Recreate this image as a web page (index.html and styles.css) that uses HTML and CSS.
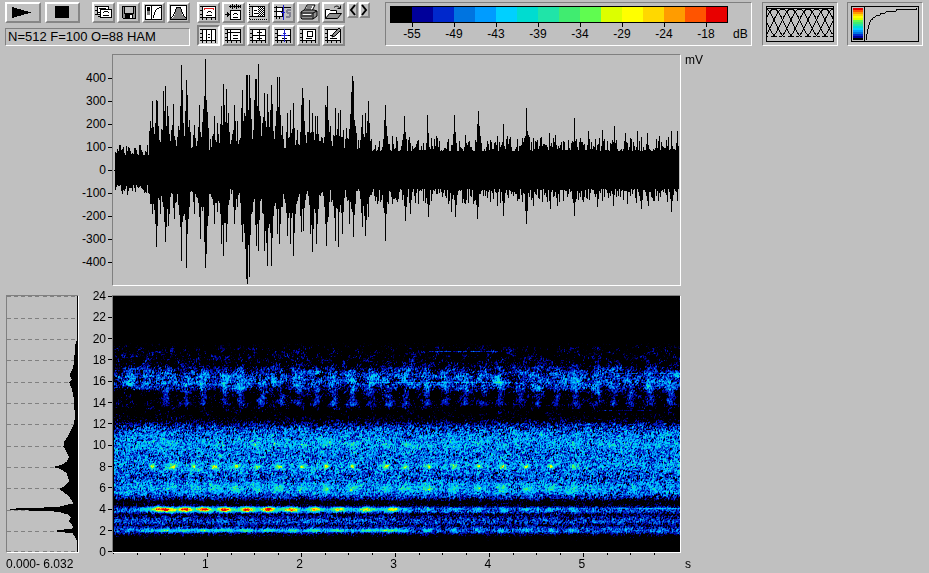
FILE: index.html
```
<!DOCTYPE html>
<html lang="en">

<head>
  <meta charset="utf-8">
  <title>Spectrogram</title>
  <link rel="stylesheet" href="styles.css">
</head>

<body>
  <!-- shapes shared by the toolbar icons -->
  <svg class="defs" width="0" height="0">
    <symbol id="sheet" viewBox="0 0 19 17">
      <path class="paper" d="M3.5 2.5h13v11h-13z" />
      <path class="ink" d="M1 2.5h2M1 6.5h2M1 10.5h2M1 13.5h2M3.5 14v2M7.5 14v2M12.5 14v2M16.5 14v2" />
    </symbol>
    <symbol id="chirp" viewBox="0 0 19 17">
      <path class="ink" d="M9 7.5h3M8 8.5h1M12 8.5h1M7 11.5h6" />
    </symbol>
  </svg>

  <header class="toolbar">
    <div class="transport">
      <div class="buttons">
        <button class="btn play" aria-label="Play"><svg viewBox="0 0 32 17"><path d="M5 3l19 5.5L5 14z" /></svg></button>
        <button class="btn stop" aria-label="Stop"><svg viewBox="0 0 31 17"><path d="M8 2h14v12H8z" /></svg></button>
        <button class="btn" aria-label="Copy">
          <svg viewBox="0 0 19 17">
            <path class="paper" d="M3.5 2.5h11v8h-11z" />
            <path class="ink" d="M1 2.5h2M1 6.5h2M1 10.5h2M5 4.5h7" />
            <path class="paper" d="M6.5 5.5h11v8h-11z" />
            <path class="ink" d="M4 8.5h2M4 12.5h2M10 7.5h4M9 8.5h1M14 8.5h1M9 11.5h6" />
          </svg>
        </button>
        <button class="btn" aria-label="Save">
          <svg viewBox="0 0 19 17">
            <path class="grey" d="M3.5 2.5h13v12h-12l-1-1z" />
            <path d="M6 3h8v6H6z" fill="#c0c0c0" />
            <path d="M6 10h8v4H6z" />
            <path d="M11 11h2v3h-2z" fill="#fff" />
            <path class="ink" d="M5.5 3v6h9V3" />
          </svg>
        </button>
        <button class="btn" aria-label="Colour curve">
          <svg viewBox="0 0 19 17">
            <path class="paper" d="M1.5 1.5h16v14h-16z" />
            <path d="M3 3h3v4H3z" />
            <path d="M3 7h3v4H3z" fill="#808080" />
            <path class="ink" d="M7.5 2v13M9.5 14v-3M10.5 11V8M11.5 8V6M12 5.5h1M13 4.5h2M15 3.5h2" />
          </svg>
        </button>
        <button class="btn" aria-label="Window function">
          <svg viewBox="0 0 19 17">
            <path class="paper" d="M1.5 1.5h16v14h-16z" />
            <path d="M2 14h1l2-2 3-8h3l3 8 2 2h1v1H2z" fill="#808080" />
            <path class="ink" d="M2 13.5h1M3.5 13v-1M4.5 12v-2M5.5 10V8M6.5 8V5M7.5 5V3M8 3.5h3M11.5 5V3M12.5 8V5M13.5 10V8M14.5 12v-2M15.5 13v-1M16 13.5h1" />
          </svg>
        </button>
      </div>
      <output class="status sunken">N=512 F=100 O=88 HAM</output>
    </div>

    <div class="tools">
      <button class="btn" aria-label="Spectrum peak"><svg viewBox="0 0 19 17"><use href="#sheet" /><use href="#chirp" /><path class="red" d="M5.5 6V4.5h9V6" /></svg></button>
      <button class="btn" aria-label="Waveform and spectrogram">
        <svg viewBox="0 0 19 17">
          <path class="paper" d="M6.5 6.5h10v9h-10z" />
          <path class="ink" d="M5 2.5h12M6.5 1v3M8.5 0v5M10.5 1v3M12.5 0v5M14.5 1v3M16.5 1v3M1 10.5h5M3.5 8v5M4.5 9v3M10 9.5h3M9 10.5h1M13 10.5h1M9 13.5h5" />
        </svg>
      </button>
      <button class="btn" aria-label="Selection">
        <svg viewBox="0 0 19 17">
          <path class="paper" d="M3.5 2.5h12v10h-12z" />
          <path class="dots" d="M9 3.5h6M10 4.5h5M9 5.5h6M10 6.5h5M9 7.5h6M10 8.5h5M9 9.5h6M10 10.5h5M9 11.5h6" />
          <path class="dots" d="M.5 0v16M1 15.5h18" />
          <path class="ink" d="M5 6.5h3M5 9.5h4M0 2.5h3M1 12.5h2" />
        </svg>
      </button>
      <button class="btn" aria-label="Split view">
        <svg viewBox="0 0 19 17">
          <path class="paper" d="M2.5 3.5h6v9h-6z" />
          <path class="ink" d="M0 3.5h17M0 7.5h8M0 12.5h8M2.5 2v13M5.5 13v2" />
          <path class="blue" d="M9.5 1v15M7 8.5h4" />
          <path class="shade" d="M17 6h-4M13 6v3M13 9h4M16 9v4M12 13h4" />
        </svg>
      </button>
      <button class="btn" aria-label="Print">
        <svg viewBox="0 0 19 17" class="smooth">
          <path class="paper" d="M5 7l3-6h8l-3 6z" />
          <path class="grey" d="M2 8l3-2h10l3 1v5l-4 3H3l-1-1z" />
          <path class="ink" d="M8 3h5M7 5h5M2 9h12l4-2M3 12h10M14 9v6" />
          <path d="M4 10h8v1H4z" fill="#fff" />
        </svg>
      </button>
      <button class="btn" aria-label="Open">
        <svg viewBox="0 0 19 17" class="smooth">
          <path class="paper" d="M1.5 14.5v-9h4l1 1h6v3" />
          <path class="grey" d="M1.5 14.5l4-5h12l-4 5z" />
          <path class="ink" d="M10 3.5c2-2 4-2 6 1M16.5 1.5v3h-3" />
        </svg>
      </button>
      <button class="btn pressed" aria-label="Time bars"><svg viewBox="0 0 19 17"><use href="#sheet" /><path class="ink" d="M7.5 3v11M12.5 3v11M9 7.5h2M9 10.5h2" /></svg></button>
      <button class="btn" aria-label="Frequency bars"><svg viewBox="0 0 19 17"><use href="#sheet" /><path class="ink" d="M4 5.5h13M6.5 3v11M9 8.5h5M9 11.5h5" /></svg></button>
      <button class="btn" aria-label="Cross cursor"><svg viewBox="0 0 19 17"><use href="#sheet" /><path class="ink" d="M4 8.5h13M10.5 3v11M8 5.5h5M8 11.5h5" /></svg></button>
      <button class="btn" aria-label="Measuring cursor"><svg viewBox="0 0 19 17"><use href="#sheet" /><path class="ink" d="M4 8.5h13M8 11.5h5" /><path class="blue" d="M10.5 2v13M7 8.5h7M9 6.5h3" /></svg></button>
      <button class="btn" aria-label="Box cursor"><svg viewBox="0 0 19 17"><use href="#sheet" /><path class="ink" d="M8.5 4.5h5v5h-5zM7 11.5h6" /></svg></button>
      <button class="btn" aria-label="Draw">
        <svg viewBox="0 0 19 17">
          <use href="#sheet" />
          <path class="ink" d="M6 8.5h2M6 11.5h7" />
          <path class="grey smooth" d="M8 10l1-3 6-6 2 2-6 6z" />
        </svg>
      </button>
    </div>

    <div class="scroll">
      <button class="btn" aria-label="Back"><svg viewBox="0 0 7 12"><path class="arrow" d="M6 1L2 6l4 5" /></svg></button>
      <button class="btn" aria-label="Forward"><svg viewBox="0 0 7 12"><path class="arrow" d="M1 1l4 5-4 5" /></svg></button>
    </div>

    <div class="legend panel sunken">
      <div class="scale">
        <div class="colors" id="colors"></div>
        <div class="levels">
          <span>-55</span><span>-49</span><span>-43</span><span>-39</span><span>-34</span><span>-29</span><span>-24</span><span>-18</span>
        </div>
      </div>
      <span class="unit">dB</span>
    </div>

    <div class="panel sunken">
      <svg class="preview" viewBox="0 0 68 36">
        <path class="ink" id="windows" />
        <path class="frame" d="M.5.5h67v35H.5zM0 2.5h68" />
      </svg>
    </div>

    <div class="panel sunken">
      <svg class="preview" viewBox="0 0 68 36">
        <g id="ramp"></g>
        <path class="frame" d="M.5.5h67v35H.5zM13.5 0v36" />
        <path class="ink" d="M15.5 34v-6M16.5 28v-5M17.5 23v-4M18.5 19v-3M19.5 16v-2M20 13.5h2M21.5 13v-1M22 11.5h2M24.5 11v-1M25 9.5h4M29 8.5h1M29 7.5h5M34.5 7v-1M35 5.5h10M45.5 5V3M45 3.5h21M65.5 3V2" />
      </svg>
    </div>
  </header>

  <main class="plots">
    <div class="axis amplitude">
      <span>400</span><span>300</span><span>200</span><span>100</span><span>0</span><span>-100</span><span>-200</span><span>-300</span><span>-400</span>
    </div>
    <div class="plot wave sunken"><canvas id="wave" width="567" height="230"></canvas></div>
    <div class="side-unit">mV</div>

    <div class="average sunken">
      <svg viewBox="21 33 210 768" preserveAspectRatio="none">
        <path class="rules" d="M21 35h206M21 99h206M21 163h206M21 227h206M21 291h206M21 355h206M21 419h206M21 483h206M21 547h206M21 611h206M21 675h206M21 739h206M21 800h206" />
        <path d="M231 33L228 35L227 165L223 180L220 220L217 245L207 270L213 285L205 292L212 310L217 330L220 360L222 400L218 420L210 435L200 455L190 470L188 485L197 500L204 515L198 530L182 540L158 546L180 552L198 565L205 590L190 605L174 612L190 622L205 635L218 655L175 665L105 669L30 671L30 675L105 677L170 680L200 688L210 698L204 707L213 720L218 730L168 736L168 740L215 745L222 755L227 765L228 801L231 801z" />
      </svg>
    </div>
    <div class="axis frequency">
      <span>24</span><span>22</span><span>20</span><span>18</span><span>16</span><span>14</span><span>12</span><span>10</span><span>8</span><span>6</span><span>4</span><span>2</span><span>0</span>
    </div>
    <div class="plot sunken"><canvas id="spectrogram" width="567" height="256"></canvas></div>

    <div class="range">0.000- 6.032</div>
    <div class="axis time">
      <svg viewBox="0 0 567 4" preserveAspectRatio="none">
        <path class="ink" d="M.5 0v1M24.5 0v2M47.5 0v2M71.5 0v2M94.5 0v4M118.5 0v2M141.5 0v2M165.5 0v2M188.5 0v4M212.5 0v2M235.5 0v2M259.5 0v2M282.5 0v4M306.5 0v2M329.5 0v2M353.5 0v2M376.5 0v4M400.5 0v2M423.5 0v2M447.5 0v2M470.5 0v4M494.5 0v2M517.5 0v2M541.5 0v2" />
      </svg>
      <div class="seconds"><span>1</span><span>2</span><span>3</span><span>4</span><span>5</span></div>
    </div>
    <div class="side-unit seconds-unit">s</div>
  </main>

  <script src="script.js"></script>
</body>

</html>
```

FILE: styles.css
```
* {
  box-sizing: border-box;
}

body {
  margin: 0;
  background: #c0c0c0;
  color: #000;
  font: 12px/14px "Liberation Sans", Arial, sans-serif;
}

svg,
canvas {
  display: block;
}

svg {
  shape-rendering: crispEdges;
}

.defs {
  position: absolute;
}

.ink,
.frame {
  fill: none;
  stroke: #000;
}

.paper {
  fill: #fff;
  stroke: #000;
}

.grey {
  fill: #909090;
  stroke: #000;
}

.red {
  fill: none;
  stroke: #e02020;
}

.blue {
  fill: none;
  stroke: #2020d0;
}

.shade {
  fill: none;
  stroke: #808090;
  stroke-width: 2;
}

.dots {
  fill: none;
  stroke: #000;
  stroke-dasharray: 1 1;
}

.arrow {
  fill: none;
  stroke: #000;
  stroke-width: 2;
}

.smooth,
.arrow {
  shape-rendering: auto;
}

.sunken {
  border: 1px solid;
  border-color: #808080 #fff #fff #808080;
}

/* toolbar */
.toolbar {
  display: flex;
  align-items: flex-start;
  padding: 2px 5px 8px;
}

.transport {
  width: 185px;
  margin-right: 7px;
}

.buttons {
  display: flex;
  gap: 2px;
}

.btn {
  width: 23px;
  height: 21px;
  padding: 0;
  border: 2px solid;
  border-color: #fff #868686 #868686 #fff;
  background: #c0c0c0;
}

.btn svg {
  width: 100%;
  height: 100%;
}

.play {
  width: 36px;
  margin-right: 2px;
}

.stop {
  width: 35px;
  margin-right: 10px;
}

.pressed {
  border-color: #808080 #fff #fff #808080;
  background: #cfcfcf;
}

.status {
  display: block;
  height: 18px;
  margin-top: 5px;
  padding-left: 2px;
  font-size: 13px;
  line-height: 16px;
  white-space: nowrap;
}

.tools {
  display: grid;
  grid-template-columns: repeat(6, 23px);
  gap: 2px;
}

.scroll {
  display: flex;
  gap: 1px;
  margin: 0 15px 0 2px;
}

.scroll .btn {
  width: 11px;
  height: 16px;
}

.panel {
  height: 44px;
  padding: 3px;
  margin-right: 9px;
}

.legend {
  display: flex;
  width: 368px;
  margin-right: 10px;
  padding-left: 4px;
  gap: 5px;
}

.scale {
  width: 338px;
}

.colors {
  display: flex;
  height: 17px;
  border: 1px solid #000;
}

.colors span {
  flex: 1;
}

.levels {
  display: flex;
  padding: 0 1px;
}

.levels span {
  flex: 1;
  text-align: center;
}

.levels span::before {
  content: "";
  display: block;
  width: 1px;
  height: 4px;
  margin: 0 auto;
  background: #000;
}

.legend .unit {
  align-self: flex-end;
  margin-bottom: 1px;
}

.preview {
  width: 68px;
  height: 36px;
}

/* plots */
.plots {
  display: grid;
  grid-template-columns: 73px 33px minmax(0, 1fr) 248px;
  padding-left: 6px;
}

.plot canvas {
  width: 100%;
  image-rendering: pixelated;
}

.plot {
  align-self: start;
}

.wave {
  margin-bottom: 9px;
}

.amplitude {
  grid-column: 2;
  padding-top: 13px;
  line-height: 23px;
}

.amplitude,
.frequency {
  display: flex;
  flex-direction: column;
}

.amplitude span,
.frequency span {
  display: flex;
  align-items: center;
  justify-content: flex-end;
  gap: 2px;
}

.amplitude span::after,
.frequency span::after {
  content: "";
  width: 4px;
  height: 1px;
  background: #000;
}

.frequency {
  justify-content: space-between;
  margin: -6px 0;
}

.average svg {
  width: 100%;
  height: 256px;
}

.rules {
  fill: none;
  stroke: #808080;
  stroke-width: 3;
  stroke-dasharray: 12 9;
}

.side-unit {
  padding-left: 4px;
  line-height: 12px;
}

.range {
  grid-column: 1 / 3;
  padding-top: 4px;
}

.time svg {
  width: 100%;
  height: 4px;
}

.time {
  padding: 0 1px;
}

.seconds {
  display: flex;
  padding: 0 9% 0 8%;
}

.seconds span {
  flex: 1;
  text-align: center;
}

.seconds-unit {
  padding-top: 5px;
}
```

FILE: script.js
```
const palette = [
  [0, 0, 0], [0, 0, 154], [0, 40, 204], [0, 116, 224],
  [0, 156, 255], [0, 208, 255], [0, 220, 208], [32, 228, 168],
  [64, 236, 112], [96, 252, 80], [220, 255, 0], [255, 255, 0],
  [255, 216, 0], [255, 156, 0], [255, 84, 0], [232, 0, 0]
];

// repeatable noise
let seed = 20;
function random() {
  seed = (seed * 1664525 + 1013904223) % 4294967296;
  return seed / 4294967296;
}

function gauss() {
  return random() + random() + random() + random() - 2;
}

const css = c => `rgb(${c.map(Math.round).join(",")})`;

function colorAt(level) {
  const v = Math.max(0, Math.min(15, level));
  const i = Math.min(14, Math.floor(v));
  return palette[i].map((c, n) => c + (palette[i + 1][n] - c) * (v - i));
}

function drawLegend() {
  document.getElementById("colors").innerHTML =
    palette.map(c => `<span style="background:${css(c)}"></span>`).join("");

  document.getElementById("ramp").innerHTML = palette
    .map((c, i) => `<rect x="2" y="${32 - i * 2}" width="10" height="2" fill="${css(c)}" />`)
    .join("");
}

// overlapping analysis windows
function drawWindows() {
  let d = "";
  for (let c = -26; c < 100; c += 8.5) {
    let started = false;
    for (let x = Math.max(1, c - 20); x <= Math.min(67, c + 20); x++) {
      const y = 31 - 28 * (0.5 + 0.5 * Math.cos(Math.PI * (x - c) / 20));
      d += `${started ? "L" : "M"}${x.toFixed(1)} ${y.toFixed(1)}`;
      started = true;
    }
  }
  document.getElementById("windows").setAttribute("d", d);
}

// peaks as x, height pairs
const upPeaks = [
  37, 49, 39, 69, 43, 70, 44, 69, 50, 79, 52, 84, 54, 64, 55, 54, 58, 40, 60, 66,
  68, 105, 73, 90, 74, 75, 76, 50, 81, 45, 86, 65, 90, 61, 92, 111, 93, 70, 101, 54,
  104, 47, 108, 64, 110, 86, 113, 81, 115, 57, 121, 65, 124, 49, 129, 80, 131, 57,
  133, 95, 134, 95, 136, 95, 142, 91, 143, 91, 145, 106, 149, 47, 151, 77, 154, 76, 157, 60,
  158, 85, 164, 93, 166, 93, 169, 44, 174, 57, 177, 60, 180, 67, 184, 40, 189, 82,
  190, 72, 196, 70, 199, 57, 202, 54, 204, 54, 212, 65, 214, 84, 217, 44, 222, 62,
  225, 57, 227, 60, 230, 40, 233, 42, 236, 41, 238, 78, 239, 94, 240, 89, 249, 55, 252, 57,
  255, 69, 272, 65, 279, 34, 291, 54, 305, 30, 314, 55, 324, 32, 341, 55, 352, 35,
  365, 59, 377, 30, 390, 46, 394, 34, 413, 62, 422, 29, 436, 37, 442, 35, 450, 29,
  461, 52, 475, 39, 489, 40, 501, 44, 512, 37, 517, 32, 524, 39, 534, 37, 545, 29,
  558, 39, 564, 39
];

const downPeaks = [
  37, 33, 39, 43, 43, 76, 47, 43, 52, 71, 55, 55, 61, 48, 68, 90, 73, 97, 74, 63,
  81, 43, 87, 68, 92, 97, 93, 83, 101, 53, 104, 41, 108, 73, 110, 85, 113, 71,
  121, 53, 124, 36, 129, 71, 132, 78, 133, 108, 134, 113, 136, 106, 138, 43, 143, 75, 145, 80,
  151, 80, 154, 95, 158, 95, 164, 63, 166, 73, 169, 36, 174, 65, 177, 73, 180, 85,
  182, 43, 188, 61, 190, 60, 197, 63, 199, 81, 203, 73, 204, 53, 213, 75, 215, 46,
  222, 70, 225, 76, 229, 63, 236, 53, 240, 66, 249, 56, 252, 65, 255, 46, 272, 70,
  279, 33, 292, 50, 297, 43, 315, 46, 329, 26, 338, 41, 342, 46, 352, 33, 364, 48,
  377, 31, 384, 35, 390, 45, 404, 30, 413, 53, 420, 35, 429, 31, 437, 38, 444, 35,
  454, 26, 461, 45, 470, 31, 484, 36, 500, 35, 514, 33, 528, 38, 535, 35, 547, 26,
  558, 41, 564, 30
];

function envelope(peaks, quiet, loud) {
  const env = [];
  for (let x = 0; x < 567; x++) {
    const r = random();
    env[x] = x < 2 ? 0 : x < 36 ? quiet + r * r * 11 : loud + r * r * 15;
  }
  for (let i = 0; i < peaks.length; i += 2) {
    const x = peaks[i];
    const h = peaks[i + 1];
    env[x] = h;
    // ragged shoulders, broader inside the loud part
    const reach = x < 260 ? 3 : 2;
    for (let n = Math.max(36, x - reach); n <= Math.min(565, x + reach); n++) {
      const drop = [1, 0.66, 0.48, 0.36][Math.abs(n - x)];
      env[n] = Math.max(env[n], h * drop * (n === x ? 1 : 0.75 + random() * 0.45));
    }
  }
  return env;
}

function drawWave() {
  const ctx = document.getElementById("wave").getContext("2d");
  const up = envelope(upPeaks, 15, 19);
  const down = envelope(downPeaks, 14, 18);
  for (let x = 1; x < 566; x++) {
    const top = Math.round(115 - up[x]);
    ctx.fillRect(x, top, 1, Math.round(116 + down[x]) - top);
  }
}

// background level by row: y, level, spread
const rows = [
  [0, 0, 0], [46, 0, 0], [52, -0.9, 1.1], [60, -0.7, 1.2], [68, -0.7, 1.3], [74, 0.5, 1.6],
  [80, 1.6, 1.8], [87, 1.8, 1.8], [93, 0.1, 1.5], [97, -0.9, 1.1], [112, -1, 1],
  [119, -0.8, 0.8], [125, -0.1, 1.1], [131, 1.7, 2], [138, 3.2, 2], [148, 3.8, 2],
  [158, 2.8, 2], [168, 3.4, 2], [174, 3.1, 2], [182, 2.2, 1.9], [189, 3.6, 1.9],
  [196, 3.3, 1.8], [201, 1.6, 1.6], [205, -0.6, 0.9], [209, -0.3, 0.9], [212, 2.5, 1.6],
  [215, 2.4, 1.6], [218, 0.1, 1.1], [223, 1.8, 1.6], [226, 2, 1.6], [229, 0.6, 1.1],
  [233, 2.5, 1.6], [235, 2.4, 1.6], [238, 0, 1], [241, -0.9, 0.7], [245, 0, 0], [256, 0, 0]
];

const whistles = [52, 72, 91, 111, 133, 155, 178, 201, 225, 253, 280];
const dots8k = [39, 60, 81, 101, 122, 144, 165, 189, 213, 239, 272, 292, 315, 341, 365, 389, 413, 437, 460];
const columns = [
  17, 35, 52, 72, 89, 111, 127, 148, 167, 185, 202, 220, 239, 257, 274, 292, 313, 332,
  351, 369, 387, 406, 424, 443, 462, 484, 500, 517, 536, 557
];

const bump = (v, center, width) => Math.exp(-Math.pow((v - center) / width, 2));

function rowAt(y) {
  let i = 1;
  while (rows[i][0] < y) i++;
  const [y0, l0, s0] = rows[i - 1];
  const [y1, l1, s1] = rows[i];
  const t = (y - y0) / (y1 - y0);
  return [l0 + (l1 - l0) * t, s0 + (s1 - s0) * t];
}

// slow variation, interpolated between random values on a coarse grid
function patches(w, h, sx, sy) {
  const cols = Math.ceil(w / sx) + 2;
  const grid = Array.from({ length: cols * (Math.ceil(h / sy) + 2) }, gauss);
  return (x, y) => {
    const i = Math.floor(x / sx);
    const j = Math.floor(y / sy);
    const u = x / sx - i;
    const v = y / sy - j;
    const at = (a, b) => grid[b * cols + a];
    return (at(i, j) * (1 - u) + at(i + 1, j) * u) * (1 - v) +
      (at(i, j + 1) * (1 - u) + at(i + 1, j + 1) * u) * v;
  };
}

function drawSpectrogram() {
  const w = 567;
  const h = 256;
  const level = [];
  const grain = Array.from({ length: w * (h + 1) + 1 }, gauss);
  const patch = patches(w, h, 5, 4);

  for (let y = 0; y < h; y++) {
    const [base, spread] = rowAt(y);
    const clump = y > 48 && y < 120 ? 1.1 : 0.4;
    for (let x = 0; x < w; x++) {
      const i = y * w + x;
      const noise = grain[i] * 1.1 + grain[i + w] * 0.6 + grain[i + 1] * 0.3;
      level[i] = base + spread * (noise + (spread > 0.5 ? clump * patch(x, y) : 0));
    }
  }

  function add(cx, cy, rx, ry, gain) {
    for (let y = Math.max(0, Math.floor(cy - ry * 2)); y <= cy + ry * 2 && y < h; y++) {
      for (let x = Math.max(0, Math.floor(cx - rx * 2)); x <= cx + rx * 2 && x < w; x++) {
        level[y * w + x] += gain * bump(x, cx, rx) * bump(y, cy, ry);
      }
    }
  }

  // 4 kHz calls, fading with time
  for (let x = 30; x < 290; x += 5) {
    add(x, 213, 4, 2, x < 180 ? 2.6 : 1.6);
    add(x, 234, 4, 1.5, 1.6);
  }
  whistles.forEach((x, i) => {
    const gain = 10.5 - Math.max(0, i - 5) * 1;
    add(x, 213, 6, 2.5, gain);
    add(x, 234, 6, 1.5, 3);
  });
  add(44, 212, 4, 3, 6);
  add(60, 214, 4, 2, 3);

  // harmonics
  dots8k.forEach((x, i) => {
    add(x, 170, 3, 2.2, i > 10 ? 6.5 : 7.5);
    add(x, 192, 5, 3.5, i > 2 ? 3 : 1.5);
    add(x, 148, 4, 3, i > 4 && i < 13 ? 2.2 : 0.5);
    if (i > 9) {
      add(x, 213, 4, 2, 2.5);
      add(x, 234, 4, 2, 3);
    }
  });
  add(83, 174, 9, 2, 3.5);
  add(55, 172, 5, 2, 2.5);

  columns.forEach((x, i) => {
    add(x, 77, 6, 9, 1.3);
    add(x, 91, 4, 7, 1.4);
    if (i > 1) {
      add(x + 1, 99, 3.5, 7, 2);
      add(x, 107, 5, 4, 2.1);
    }
  });
  add(125, 93, 7, 9, 1.6);
  add(460, 80, 13, 7, 1.3);

  // thin steady tones
  for (let x = 250; x < 400; x++) {
    level[86 * w + x] += 1.5;
    if (x > 315 && x < 386) level[55 * w + x] += 2.4;
  }
  for (let x = 485; x < 540; x++) level[114 * w + x] += 1.6;
  for (let x = 500; x < 567; x++) {
    level[212 * w + x] += 1.5;
    level[77 * w + x] += 1.2;
  }

  const ctx = document.getElementById("spectrogram").getContext("2d");
  const image = ctx.createImageData(w, h);
  level.forEach((v, i) => {
    const c = colorAt(i % w < 1 ? 0 : v);
    image.data.set([c[0], c[1], c[2], 255], i * 4);
  });
  ctx.putImageData(image, 0, 0);
}

drawLegend();
drawWindows();
drawWave();
drawSpectrogram();
```
